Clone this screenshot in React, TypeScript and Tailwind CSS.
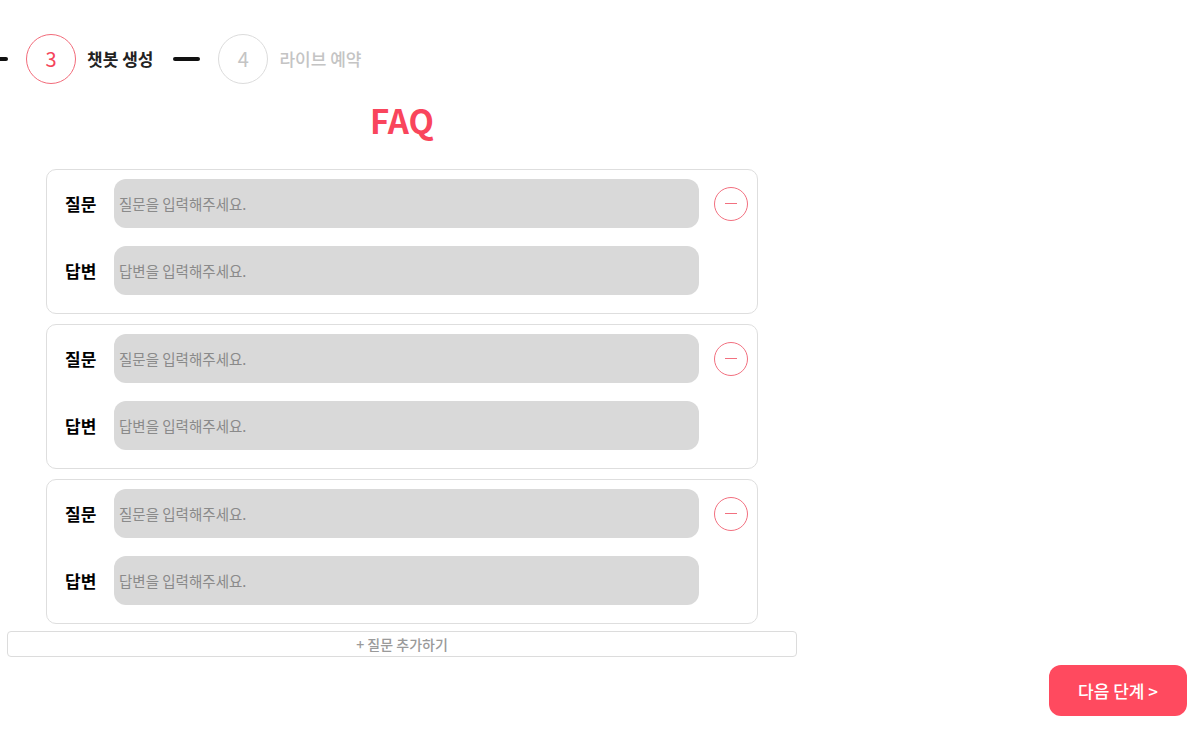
import React from 'react';

const font = { fontFamily: '"Noto Sans CJK KR", "Noto Sans", sans-serif' };

type Faq = { q: string; a: string };

const FaqCard: React.FC<{ item: Faq }> = ({ item }) => (
  <div className="rounded-[10px] border border-[#dedede] bg-white pt-[9px] pb-[18px] pl-[18px] pr-[9px] flex flex-col gap-[18px]">
    <div className="flex items-center">
      <span className="w-[33px] text-[17px] font-bold text-black leading-none">질문</span>
      <input
        className="ml-[16px] h-[49px] w-[585px] rounded-[12px] bg-[#d9d9d9] pl-[5px] text-[14.5px] text-[#333] placeholder:text-[#8a8a8a] outline-none"
        placeholder="질문을 입력해주세요."
        defaultValue={item.q}
      />
      <button className="ml-[15px] flex h-[34px] w-[34px] items-center justify-center rounded-full border border-[#f2707f] bg-white">
        <span className="block h-[1px] w-[12px] bg-[#f2707f]" />
      </button>
    </div>
    <div className="flex items-center">
      <span className="w-[33px] text-[17px] font-bold text-black leading-none">답변</span>
      <input
        className="ml-[16px] h-[49px] w-[585px] rounded-[12px] bg-[#d9d9d9] pl-[5px] text-[14.5px] text-[#333] placeholder:text-[#8a8a8a] outline-none"
        placeholder="답변을 입력해주세요."
        defaultValue={item.a}
      />
    </div>
  </div>
);

export default function App() {
  const items: Faq[] = [
    { q: '', a: '' },
    { q: '', a: '' },
    { q: '', a: '' },
  ];

  return (
    <div className="min-h-[744px] w-full overflow-hidden bg-white pt-[34px]" style={font}>
      {/* stepper */}
      <div className="ml-[-19px] flex h-[50px] items-center">
        <span className="block h-[4px] w-[27px] rounded-full bg-[#111]" />
        <div className="ml-[18px] flex h-[50px] w-[50px] items-center justify-center rounded-full border border-[#f26b7a] text-[20px] text-[#f5455b]">
          3
        </div>
        <span className="ml-[11px] text-[17px] font-bold text-[#222]">챗봇 생성</span>
        <span className="ml-[20px] block h-[4px] w-[27px] rounded-full bg-[#111]" />
        <div className="ml-[18px] flex h-[50px] w-[50px] items-center justify-center rounded-full border border-[#dcdcdc] text-[20px] text-[#c4c4c4]">
          4
        </div>
        <span className="ml-[11px] text-[17px] font-medium text-[#c4c4c4]">라이브 예약</span>
      </div>

      {/* main column */}
      <div className="ml-[7px] w-[790px]">
        <h1 className="mt-[16px] h-[40px] text-center text-[33px] font-bold leading-[40px] text-[#f9455c]">FAQ</h1>

        <div className="mx-[39px] mt-[29px] flex flex-col gap-[10px]">
          {items.map((it, i) => (
            <FaqCard key={i} item={it} />
          ))}
        </div>

        <button className="mt-[7px] flex h-[26px] w-full items-center justify-center rounded-[4px] border border-[#dcdcdc] bg-white text-[14px] font-medium text-[#9a9a9a]">
          + 질문 추가하기
        </button>
      </div>

      <div className="mt-[8px] flex justify-end pr-[16px]">
        <button className="flex h-[51px] w-[138px] items-center justify-center rounded-[12px] bg-[#ff4a5f] text-[17px] font-medium text-white">
          다음 단계 &gt;
        </button>
      </div>
    </div>
  );
}
